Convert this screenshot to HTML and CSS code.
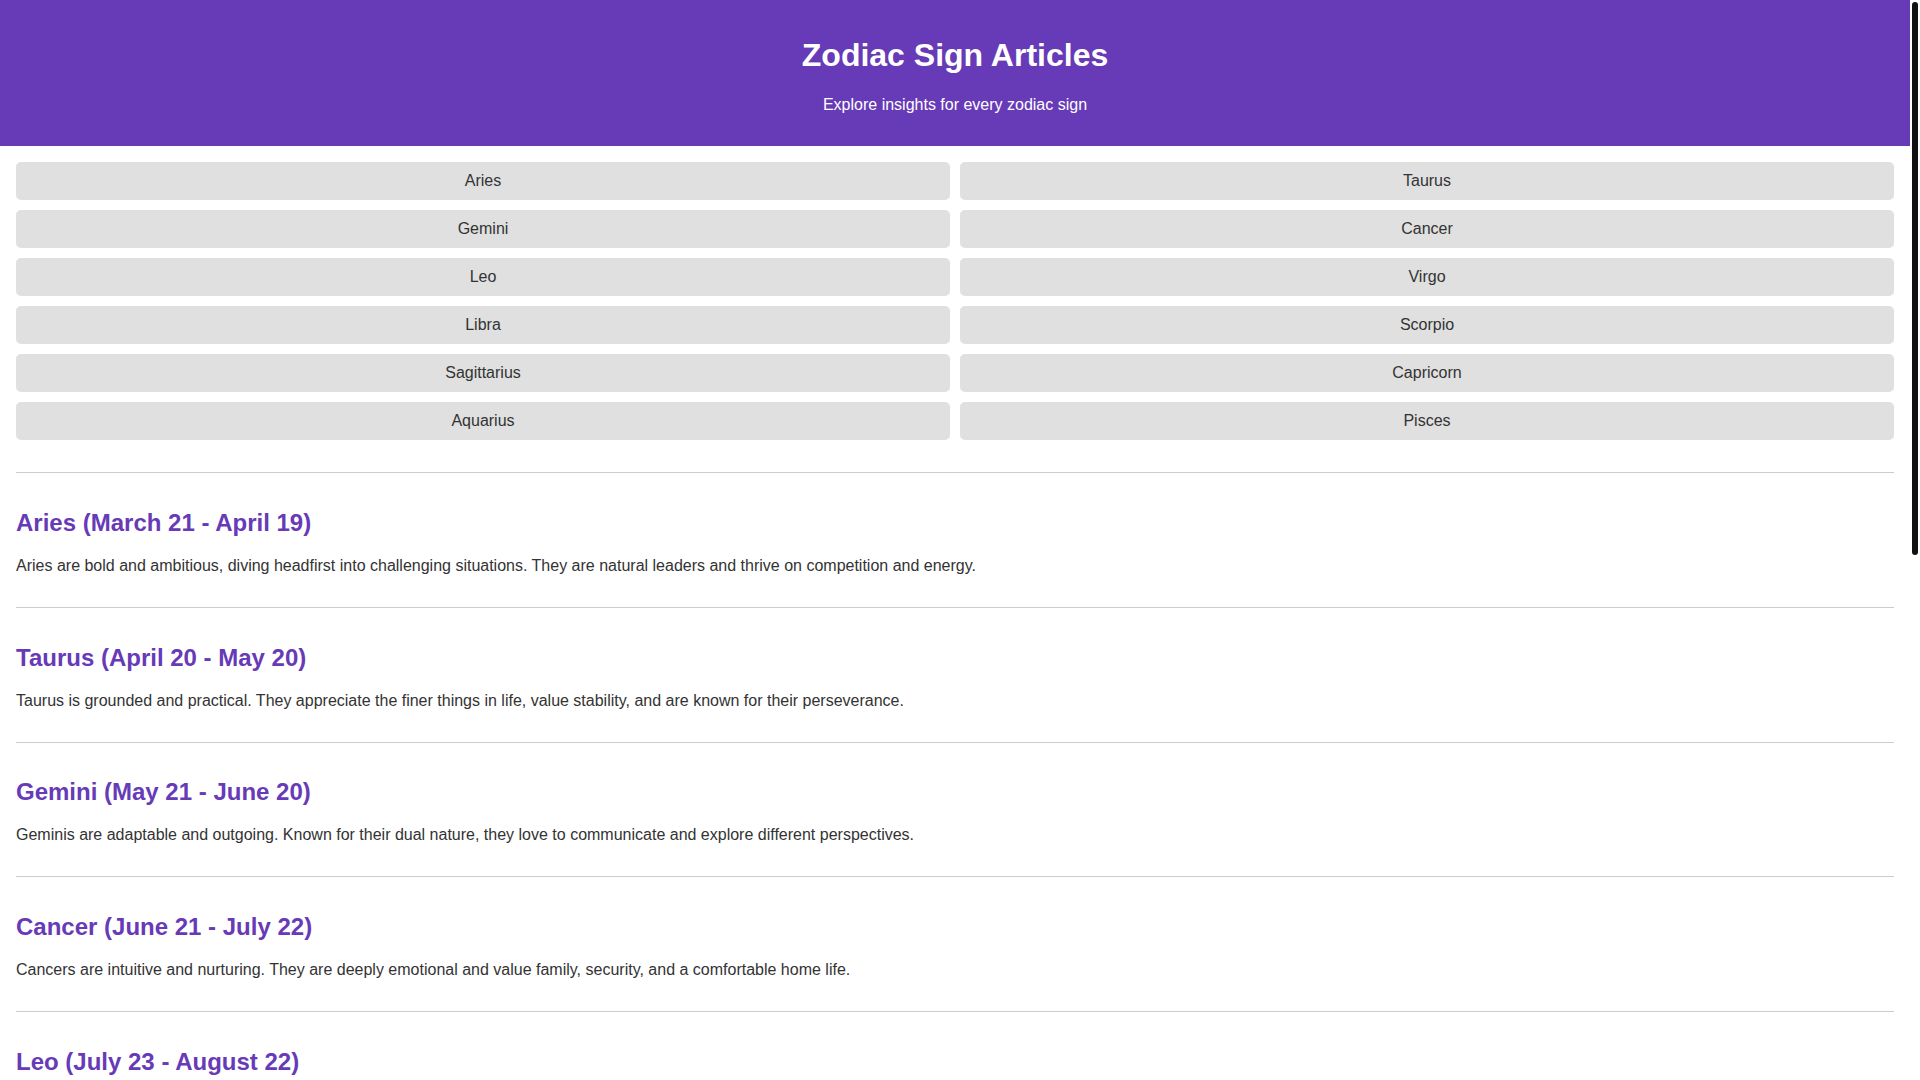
FILE: index.html
```html
<!DOCTYPE html>
<html lang="en">
<head>
    <meta charset="UTF-8">
    <meta name="viewport" content="width=device-width, initial-scale=1.0">
    <title>Zodiac Sign Articles</title>
    <link rel="stylesheet" href="styles.css">
</head>
<body>
<header class="header">
    <h1>Zodiac Sign Articles</h1>
    <p>Explore insights for every zodiac sign</p>
</header>

<div class="container">
    <nav class="sign-nav">
        <a href="#aries" class="sign-button">Aries</a>
        <a href="#taurus" class="sign-button">Taurus</a>
        <a href="#gemini" class="sign-button">Gemini</a>
        <a href="#cancer" class="sign-button">Cancer</a>
        <a href="#leo" class="sign-button">Leo</a>
        <a href="#virgo" class="sign-button">Virgo</a>
        <a href="#libra" class="sign-button">Libra</a>
        <a href="#scorpio" class="sign-button">Scorpio</a>
        <a href="#sagittarius" class="sign-button">Sagittarius</a>
        <a href="#capricorn" class="sign-button">Capricorn</a>
        <a href="#aquarius" class="sign-button">Aquarius</a>
        <a href="#pisces" class="sign-button">Pisces</a>
    </nav>

    <article class="article" id="aries">
        <h2>Aries (March 21 - April 19)</h2>
        <p>Aries are bold and ambitious, diving headfirst into challenging situations. They are natural leaders and thrive on competition and energy.</p>
    </article>
    <article class="article" id="taurus">
        <h2>Taurus (April 20 - May 20)</h2>
        <p>Taurus is grounded and practical. They appreciate the finer things in life, value stability, and are known for their perseverance.</p>
    </article>
    <article class="article" id="gemini">
        <h2>Gemini (May 21 - June 20)</h2>
        <p>Geminis are adaptable and outgoing. Known for their dual nature, they love to communicate and explore different perspectives.</p>
    </article>
    <article class="article" id="cancer">
        <h2>Cancer (June 21 - July 22)</h2>
        <p>Cancers are intuitive and nurturing. They are deeply emotional and value family, security, and a comfortable home life.</p>
    </article>
    <article class="article" id="leo">
        <h2>Leo (July 23 - August 22)</h2>
        <p>Leos are confident and charismatic. They love the spotlight, are generous with their warmth, and lead with a big heart.</p>
    </article>
    <article class="article" id="virgo">
        <h2>Virgo (August 23 - September 22)</h2>
        <p>Virgos are analytical and hardworking. They pay close attention to detail and take pride in being helpful and organized.</p>
    </article>
    <article class="article" id="libra">
        <h2>Libra (September 23 - October 22)</h2>
        <p>Libras are diplomatic and fair-minded. They seek balance and harmony, and have a deep appreciation for beauty and art.</p>
    </article>
    <article class="article" id="scorpio">
        <h2>Scorpio (October 23 - November 21)</h2>
        <p>Scorpios are passionate and determined. They are fiercely loyal, resourceful, and never afraid to dig beneath the surface.</p>
    </article>
    <article class="article" id="sagittarius">
        <h2>Sagittarius (November 22 - December 21)</h2>
        <p>Sagittarians are adventurous and optimistic. They love freedom, travel, and the pursuit of knowledge and new experiences.</p>
    </article>
    <article class="article" id="capricorn">
        <h2>Capricorn (December 22 - January 19)</h2>
        <p>Capricorns are disciplined and responsible. They set high goals and work patiently and steadily to achieve them.</p>
    </article>
    <article class="article" id="aquarius">
        <h2>Aquarius (January 20 - February 18)</h2>
        <p>Aquarians are independent and inventive. They think outside the box and care deeply about humanitarian causes.</p>
    </article>
    <article class="article" id="pisces">
        <h2>Pisces (February 19 - March 20)</h2>
        <p>Pisces are compassionate and artistic. They are deeply empathetic dreamers with a rich imagination and strong intuition.</p>
    </article>
</div>

<!-- scroll indicator down the right edge -->
<div class="scroll-track"><div class="scroll-thumb"></div></div>
</body>
</html>
```

FILE: styles.css
```css
body {
    font-family: "Liberation Sans", Arial, sans-serif;
    margin: 0 10px 0 0;
    background: #fff;
    color: #333;
}
.header {
    background: #673ab7;
    color: white;
    text-align: center;
    padding: 1rem;
}
.header h1 {
    font-size: 2em;
    margin: 0.67em 0;
}
.header p {
    margin: 1rem 0;
}
.container {
    padding: 1rem;
}
.sign-nav {
    display: grid;
    grid-template-columns: 1fr 1fr;
    gap: 10px;
    margin-bottom: 2rem;
}
.sign-button {
    display: block;
    background: #e0e0e0;
    color: #333;
    text-align: center;
    text-decoration: none;
    padding: 10px;
    border-radius: 5px;
}
.sign-button:hover {
    background: #d0d0d0;
}
.article {
    border-top: 1px solid #ccc;
    padding: 1rem 0;
}
.article h2 {
    color: #673ab7;
    font-size: 1.5em;
    margin: 0.83em 0;
}
.article p {
    margin: 1rem 0;
}
.scroll-track {
    position: fixed;
    top: 0;
    right: 0;
    width: 10px;
    height: 100vh;
    background: #fff;
}
.scroll-thumb {
    margin: 2px 2px 0;
    height: 553px;
    background: #111;
    border-radius: 3px;
}
```
